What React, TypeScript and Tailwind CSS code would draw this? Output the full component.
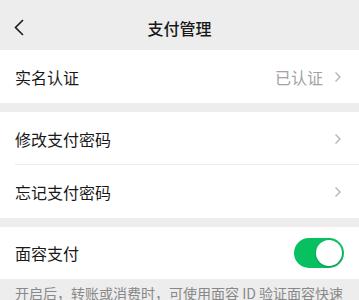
import React from "react";

const font = { fontFamily: '"Noto Sans CJK SC", "Noto Sans", sans-serif' };

function Chevron() {
  return (
    <svg width="8" height="12" viewBox="0 0 8 12" className="shrink-0">
      <path d="M1.5 1.5 L6 6 L1.5 10.5" fill="none" stroke="#b2b2b2" strokeWidth="1.3" />
    </svg>
  );
}

function Row({ label, value, divider }: { label: string; value?: string; divider?: boolean }) {
  return (
    <div className="relative flex h-[53px] items-center bg-white pl-[15px] pr-[17px]">
      <span className="flex-1 text-[16px] text-[#191919]">{label}</span>
      {value && <span className="mr-[11px] text-[16px] text-[#a3a3a3]">{value}</span>}
      <Chevron />
      {divider && <div className="absolute bottom-0 left-[15px] right-0 h-px bg-[#ececec]" />}
    </div>
  );
}

export default function App() {
  return (
    <div className="h-[300px] w-[359px] overflow-hidden bg-[#ededed]" style={font}>
      <header className="relative flex h-[50px] items-center justify-center pt-[6px]">
        <svg width="12" height="17" viewBox="0 0 12 17" className="absolute left-[13px] top-[19px]">
          <path d="M10 1 L2.5 8.5 L10 16" fill="none" stroke="#1a1a1a" strokeWidth="1.6" />
        </svg>
        <h1 className="text-[16px] font-medium text-[#191919]">支付管理</h1>
      </header>

      <Row label="实名认证" value="已认证" />

      <div className="mt-[9px]">
        <Row label="修改支付密码" divider />
        <Row label="忘记支付密码" />
      </div>

      <div className="mt-[9px] flex h-[52px] items-center bg-white pl-[15px] pr-[15px]">
        <span className="flex-1 text-[16px] text-[#191919]">面容支付</span>
        <div className="flex h-[30px] w-[50px] items-center justify-end rounded-full bg-[#07c160] p-[2px]">
          <div className="h-[26px] w-[26px] rounded-full bg-white shadow-[0_1px_2px_rgba(0,0,0,0.25)]" />
        </div>
      </div>

      <p className="px-[15px] pt-[3px] text-[14px] leading-[22px] text-[#888888]">
        开启后，转账或消费时，可使用面容 ID 验证面容快速完成付款。
      </p>
    </div>
  );
}
